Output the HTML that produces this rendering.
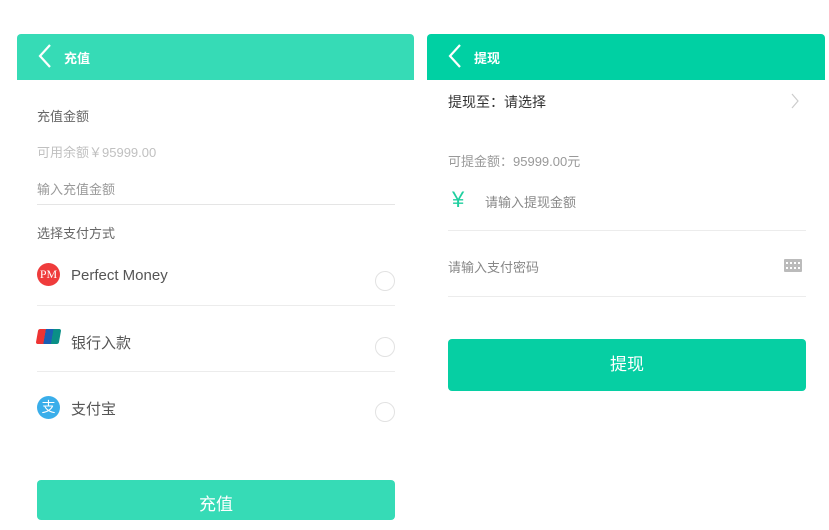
<!DOCTYPE html>
<html><head><meta charset="utf-8"><style>
*{margin:0;padding:0;box-sizing:border-box}
body{width:829px;height:511px;background:#fff;position:relative;overflow:hidden;font-family:"Liberation Sans","Noto Sans CJK SC",sans-serif}
.a{position:absolute;white-space:nowrap}
.hd{position:absolute;top:34px;height:46px;border-radius:4px 4px 0 0}
.t{font-size:13px;color:#fff;font-weight:bold}
.line{position:absolute;height:1px;background:#ececec}
.rad{position:absolute;width:20px;height:20px;border:1px solid #e2e2e2;border-radius:50%}
</style></head><body>
<div class="hd" style="left:17px;width:397px;background:#36dbb6"></div>
<svg class="a" style="left:37px;top:44px" width="16" height="24"><path d="M13 1 L3 12 L13 23" stroke="#fff" stroke-width="2.2" fill="none"/></svg>
<div class="a t" style="left:64px;top:48px">充值</div>
<div class="a" style="left:37px;top:106px;font-size:13px;color:#666">充值金额</div>
<div class="a" style="left:37px;top:142px;font-size:13px;color:#c0c0c0">可用余额￥95999.00</div>
<div class="a" style="left:37px;top:179px;font-size:13px;color:#999">输入充值金额</div>
<div class="line" style="left:37px;top:204px;width:358px;background:#e5e5e5"></div>
<div class="a" style="left:37px;top:223px;font-size:13px;color:#666">选择支付方式</div>
<div class="a" style="left:37px;top:263px;width:23px;height:23px;border-radius:50%;background:#ef3c3c;color:#fff;font-family:'Liberation Serif',serif;font-size:12px;line-height:23px;text-align:center">PM</div>
<div class="a" style="left:71px;top:267px;font-size:15px;color:#555">Perfect Money</div>
<div class="rad" style="left:375px;top:271px"></div>
<div class="line" style="left:37px;top:305px;width:358px"></div>
<div class="a" style="left:37px;top:329px;width:23px;height:15px;transform:skewX(-10deg);background:linear-gradient(90deg,#e33 0 33%,#1a5fb4 33% 66%,#0a8f86 66%);border-radius:2px"></div>
<div class="a" style="left:71px;top:332px;font-size:15px;color:#555">银行入款</div>
<div class="rad" style="left:375px;top:337px"></div>
<div class="line" style="left:37px;top:371px;width:358px"></div>
<div class="a" style="left:37px;top:396px;width:23px;height:23px;border-radius:50%;background:#3aaeea;color:#fff;font-size:14px;line-height:23px;text-align:center">支</div>
<div class="a" style="left:71px;top:398px;font-size:15px;color:#555">支付宝</div>
<div class="rad" style="left:375px;top:402px"></div>
<div class="a" style="left:37px;top:480px;width:358px;height:40px;border-radius:4px;background:#36dbb6;color:#fff;font-size:17px;text-align:center;line-height:50px">充值</div>

<div class="hd" style="left:427px;width:398px;background:#00d0a3"></div>
<svg class="a" style="left:447px;top:44px" width="16" height="24"><path d="M13 1 L3 12 L13 23" stroke="#fff" stroke-width="2.2" fill="none"/></svg>
<div class="a t" style="left:474px;top:48px">提现</div>
<div class="a" style="left:448px;top:92px;font-size:14px;color:#333">提现至：请选择</div>
<svg class="a" style="left:790px;top:93px" width="10" height="16"><path d="M2 1 L8 8 L2 15" stroke="#ccc" stroke-width="1.2" fill="none"/></svg>
<div class="a" style="left:448px;top:151px;font-size:13px;color:#999">可提金额：95999.00元</div>
<div class="a" style="left:452px;top:186px;font-size:22px;color:#1fcf9f;line-height:28px">¥</div>
<div class="a" style="left:485px;top:192px;font-size:13px;color:#888">请输入提现金额</div>
<div class="line" style="left:448px;top:230px;width:358px"></div>
<div class="a" style="left:448px;top:257px;font-size:13px;color:#888">请输入支付密码</div>
<div class="a" style="left:784px;top:259px;width:18px;height:13px;background:#bbb;border-radius:1px"><div style="margin:3px 2px;height:7px;border-top:2px dotted #fff;border-bottom:2px dotted #fff"></div></div>
<div class="line" style="left:448px;top:296px;width:358px"></div>
<div class="a" style="left:448px;top:339px;width:358px;height:52px;border-radius:4px;background:#06cfa3;color:#fff;font-size:17px;text-align:center;line-height:52px">提现</div>
</body></html>
